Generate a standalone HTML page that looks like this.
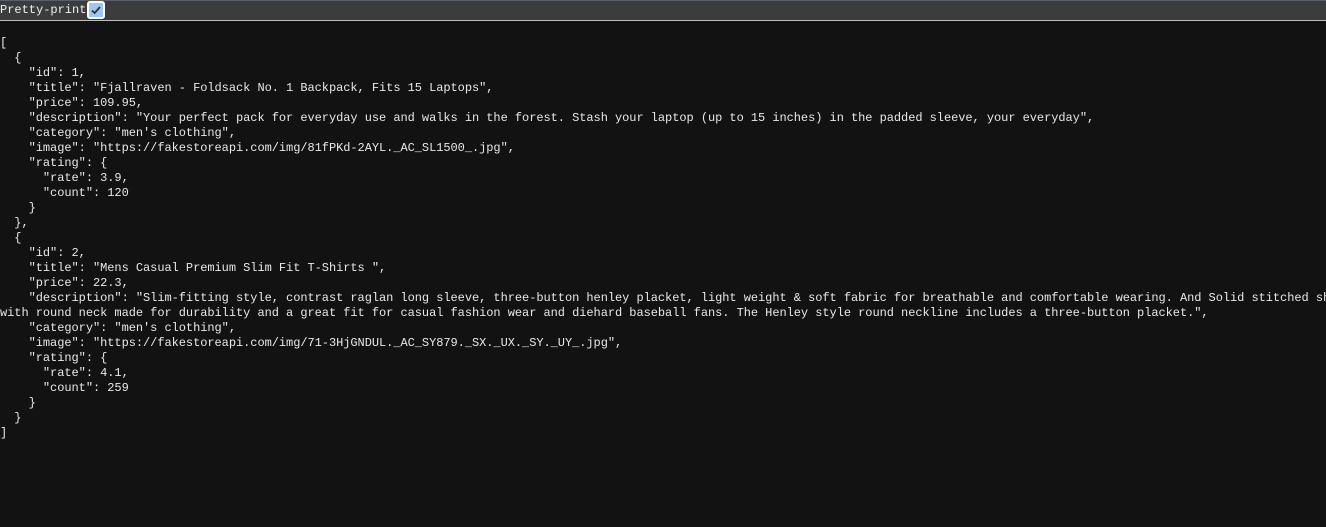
<!DOCTYPE html>
<html><head><meta charset="utf-8"><style>
html,body{margin:0;padding:0;background:#121212;width:1326px;height:527px;overflow:hidden}
.bar{background:#3c3c3c;border-top:1px solid #5a6068;border-bottom:1px solid #bdbdbd;box-sizing:border-box;height:21px;position:relative}
.bar span{position:absolute;left:0;top:2px;font:12px "Liberation Mono",monospace;color:#f0f0f0}
.cb{position:absolute;left:87px;top:0px;width:14px;height:14px;border:2px solid #fff;border-radius:3px;background:#9ec7f4;box-sizing:content-box}
pre{margin:0;position:absolute;top:36px;left:0;font:12px/15px "Liberation Mono",monospace;letter-spacing:-0.05px;color:#e8e8e8;white-space:pre}
</style></head><body>
<div class="bar"><span>Pretty-print</span><div class="cb"><svg width="14" height="14" viewBox="0 0 14 14"><path d="M3 7.5l2.6 2.6L11 4" stroke="#333" stroke-width="1.8" fill="none"/></svg></div></div>
<pre>[
  {
    "id": 1,
    "title": "Fjallraven - Foldsack No. 1 Backpack, Fits 15 Laptops",
    "price": 109.95,
    "description": "Your perfect pack for everyday use and walks in the forest. Stash your laptop (up to 15 inches) in the padded sleeve, your everyday",
    "category": "men's clothing",
    "image": "https://fakestoreapi.com/img/81fPKd-2AYL._AC_SL1500_.jpg",
    "rating": {
      "rate": 3.9,
      "count": 120
    }
  },
  {
    "id": 2,
    "title": "Mens Casual Premium Slim Fit T-Shirts ",
    "price": 22.3,
    "description": "Slim-fitting style, contrast raglan long sleeve, three-button henley placket, light weight &amp; soft fabric for breathable and comfortable wearing. And Solid stitched shirts
with round neck made for durability and a great fit for casual fashion wear and diehard baseball fans. The Henley style round neckline includes a three-button placket.",
    "category": "men's clothing",
    "image": "https://fakestoreapi.com/img/71-3HjGNDUL._AC_SY879._SX._UX._SY._UY_.jpg",
    "rating": {
      "rate": 4.1,
      "count": 259
    }
  }
]</pre>
</body></html>
